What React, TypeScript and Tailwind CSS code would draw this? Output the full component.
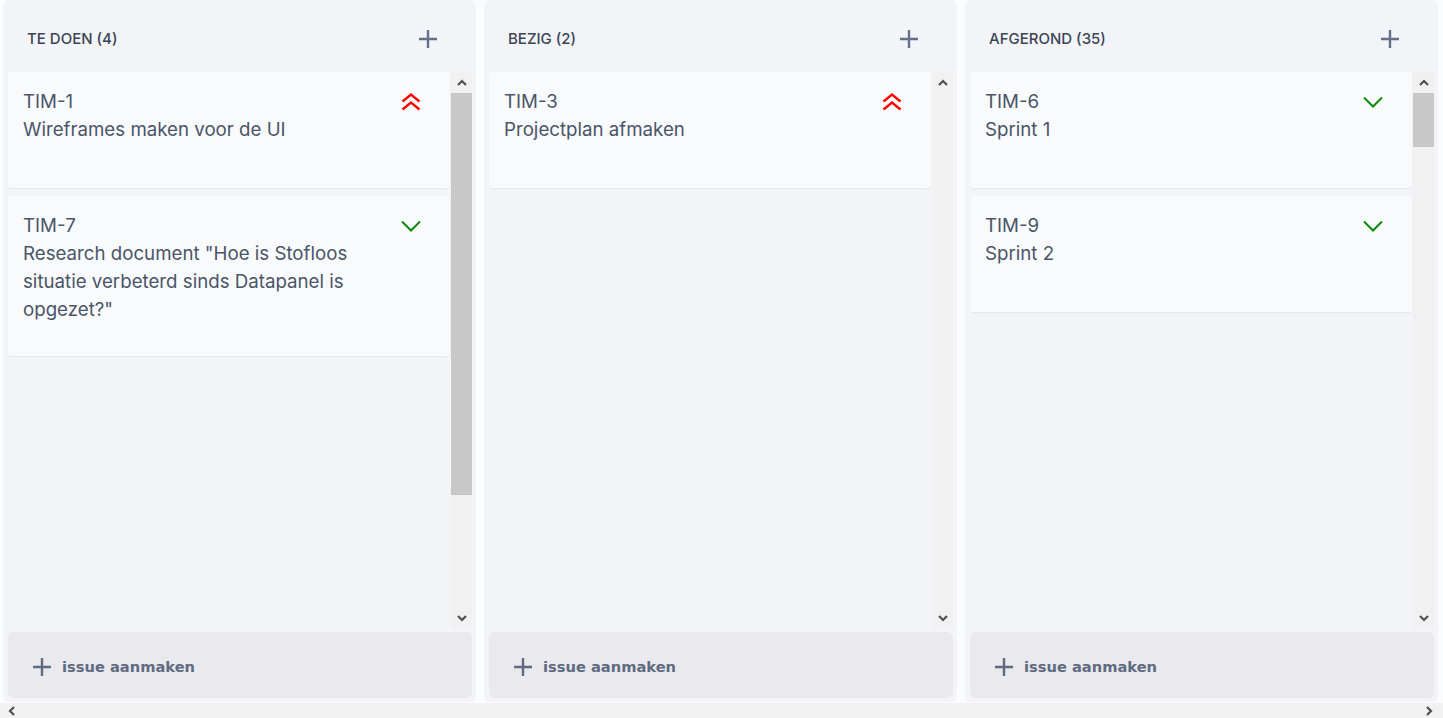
import type { ReactNode } from "react";

type Priority = "highest" | "low";

type Issue = {
  key: string;
  title: string;
  priority: Priority;
};

type Column = {
  title: string;
  count: number;
  issues: Issue[];
  // schuifbalk: positie en lengte van de duim in px (null = niets te schuiven)
  thumb: { top: number; height: number } | null;
};

const columns: Column[] = [
  {
    title: "Te doen",
    count: 4,
    issues: [
      { key: "TIM-1", title: "Wireframes maken voor de UI", priority: "highest" },
      {
        key: "TIM-7",
        title:
          'Research document "Hoe is Stofloos situatie verbeterd sinds Datapanel is opgezet?"',
        priority: "low",
      },
    ],
    thumb: { top: 0, height: 402 },
  },
  {
    title: "Bezig",
    count: 2,
    issues: [{ key: "TIM-3", title: "Projectplan afmaken", priority: "highest" }],
    thumb: null,
  },
  {
    title: "Afgerond",
    count: 35,
    issues: [
      { key: "TIM-6", title: "Sprint 1", priority: "low" },
      { key: "TIM-9", title: "Sprint 2", priority: "low" },
    ],
    thumb: { top: 0, height: 54 },
  },
];

function PlusIcon({ className }: { className?: string }) {
  return (
    <svg viewBox="0 0 20 20" className={className} fill="none" stroke="currentColor" strokeWidth={2.4}>
      <path d="M10 1v18M1 10h18" />
    </svg>
  );
}

function PriorityIcon({ priority }: { priority: Priority }) {
  if (priority === "highest") {
    return (
      <svg viewBox="0 0 20 20" className="h-5 w-5 text-[#ff0000]" fill="none" stroke="currentColor" strokeWidth={2.3}>
        <path d="M1.5 9.5 10 2.5l8.5 7M1.5 17.5 10 10.5l8.5 7" />
      </svg>
    );
  }
  return (
    <svg viewBox="0 0 20 12" className="h-3 w-5 text-[#0a8a0a]" fill="none" stroke="currentColor" strokeWidth={2}>
      <path d="M1 1.5 10 10.5l9-9" />
    </svg>
  );
}

function Arrow({ dir }: { dir: "up" | "down" | "left" | "right" }) {
  const d = {
    up: "M1 6 5 2l4 4",
    down: "M1 2l4 4 4-4",
    left: "M6 1 2 5l4 4",
    right: "M2 1l4 4-4 4",
  }[dir];
  const box = dir === "up" || dir === "down" ? "0 0 10 8" : "0 0 8 10";
  const size = dir === "up" || dir === "down" ? "h-2 w-2.5" : "h-2.5 w-2";
  return (
    <svg viewBox={box} className={`${size} text-[#505050]`} fill="none" stroke="currentColor" strokeWidth={2.2}>
      <path d={d} />
    </svg>
  );
}

function Scrollbar({ thumb }: { thumb: Column["thumb"] }) {
  return (
    <div className="flex w-[21px] shrink-0 flex-col bg-[#f1f1f1]">
      <div className="flex h-[21px] shrink-0 items-center justify-center">
        <Arrow dir="up" />
      </div>
      <div className="relative flex-1">
        {thumb ? (
          <div
            className="absolute inset-x-0 bg-[#c8c8c8]"
            style={{ top: thumb.top, height: thumb.height }}
          />
        ) : null}
      </div>
      <div className="flex h-[21px] shrink-0 items-center justify-center">
        <Arrow dir="down" />
      </div>
    </div>
  );
}

function Card({ issue }: { issue: Issue }) {
  return (
    <div className="flex min-h-[116px] shrink-0 justify-between rounded-[3px] bg-[#f9fafc] pb-8 pl-[15px] pr-[29px] pt-4 shadow-[0_1px_2px_rgba(0,0,0,0.06)]">
      <div className="pr-6 text-[18.7px] leading-7 text-[#4a5568]">
        <div>{issue.key}</div>
        <div>{issue.title}</div>
      </div>
      <div className="flex h-7 shrink-0 items-center">
        <PriorityIcon priority={issue.priority} />
      </div>
    </div>
  );
}

function BoardColumn({ column }: { column: Column }): ReactNode {
  return (
    <section className="flex h-[702px] w-[473px] shrink-0 flex-col rounded-md bg-[#f3f4f8]">
      <header className="flex h-[72px] shrink-0 items-center justify-between pl-6 pr-[38px] pt-[6px]">
        <h2 className="text-[15px] font-medium uppercase text-[#3b4556]">
          {column.title} ({column.count})
        </h2>
        <button type="button" className="text-[#64708a]" aria-label="Toevoegen">
          <PlusIcon className="h-5 w-5" />
        </button>
      </header>

      <div className="flex min-h-0 flex-1 pl-[5px] pr-1">
        <div className="flex min-w-0 flex-1 flex-col gap-2 overflow-hidden pr-px">
          {column.issues.map((issue) => (
            <Card key={issue.key} issue={issue} />
          ))}
        </div>
        <Scrollbar thumb={column.thumb} />
      </div>

      <button
        type="button"
        className="mx-[5px] mb-1 mr-1 mt-1 flex h-[66px] shrink-0 items-center gap-2.5 rounded-md bg-[#e9e9ee] pl-6 pt-[3px] font-['DejaVu_Sans',Verdana,sans-serif] text-[14.67px] font-bold text-[#5f6b80]"
      >
        <PlusIcon className="h-5 w-5 text-[#5f6b80]" />
        issue aanmaken
      </button>
    </section>
  );
}

export default function App() {
  return (
    <div className="flex h-[718px] w-full flex-col overflow-hidden bg-[#fbfcfd] font-['Inter','Noto_Sans',sans-serif]">
      <div className="flex flex-1 gap-2 pl-[3px]">
        {columns.map((column) => (
          <BoardColumn key={column.title} column={column} />
        ))}
      </div>
      <div className="flex h-[15px] shrink-0 items-center justify-between bg-[#f1f1f1] pl-2 pr-[10px]">
        <Arrow dir="left" />
        <Arrow dir="right" />
      </div>
    </div>
  );
}
